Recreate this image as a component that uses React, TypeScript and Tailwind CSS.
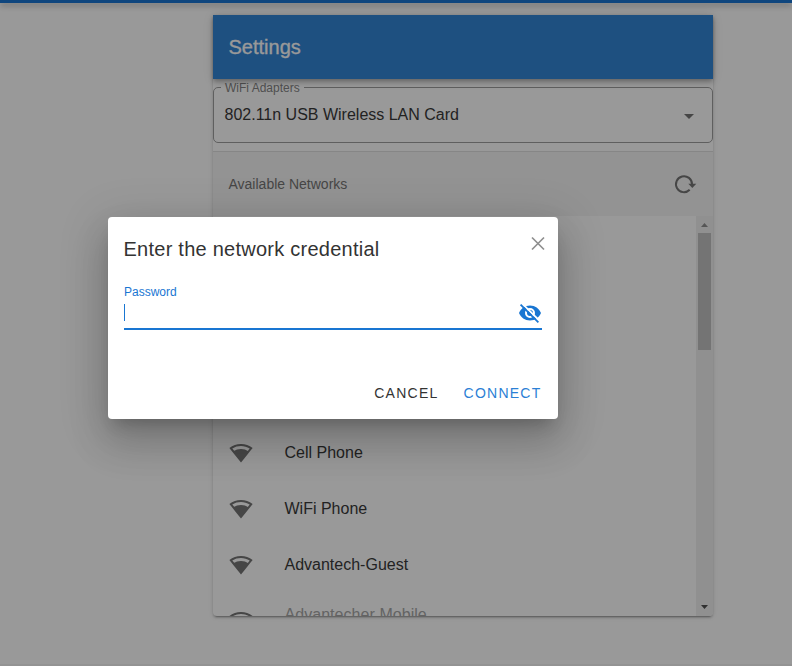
import React from 'react';

function WifiIcon() {
  return (
    <svg className="size-6 shrink-0" viewBox="0 0 24 24" fill="#757575">
      <path d="M12,3C7.79,3 3.7,4.41 0.38,7C4.41,12.06 7.89,16.37 12,21.5C16.08,16.42 20.24,11.24 23.65,7C20.32,4.41 16.22,3 12,3M12,5C15.07,5 18.09,5.86 20.71,7.45L18.77,9.88C17.26,9 14.88,8 12,8C9,8 6.68,9 5.21,9.84L3.27,7.44C5.91,5.85 8.93,5 12,5Z" />
    </svg>
  );
}

function NetworkRow({ name, faded = false }: { name: string; faded?: boolean }) {
  return (
    <li className="flex h-14 items-center pl-4">
      <WifiIcon />
      <span className={faded ? 'ml-[31.5px] -mt-3 text-base tracking-[0.05px] text-[#a6a6a6]' : 'ml-[31.5px] text-base text-[#3a3a3a]'}>{name}</span>
    </li>
  );
}

function Scrollbar() {
  return (
    <div className="flex w-[17px] flex-col items-center bg-[#f1f1f1]">
      <svg className="h-[17px] w-[17px]" viewBox="0 0 17 17" fill="#909090">
        <path d="M5 11h7L8.500 7z" />
      </svg>
      <div className="h-[117px] w-[13px] bg-[#c1c1c1]" />
      <div className="flex-1" />
      <svg className="h-[17px] w-[17px]" viewBox="0 0 17 17" fill="#505050">
        <path d="M5 6h7L8.500 10z" />
      </svg>
    </div>
  );
}

function SettingsCard() {
  return (
    <section className="mt-3 ml-[213px] flex h-[601px] w-[500px] flex-col overflow-visible rounded-b shadow-[0_3px_1px_-2px_rgba(0,0,0,0.2),0_2px_2px_0_rgba(0,0,0,0.14),0_1px_5px_0_rgba(0,0,0,0.12)]">
      <header className="relative flex h-16 shrink-0 items-center bg-[#3385d6] pl-[15.5px] text-white shadow-[0_2px_4px_-1px_rgba(0,0,0,0.2),0_4px_5px_0_rgba(0,0,0,0.14),0_1px_10px_0_rgba(0,0,0,0.12)]">
        <h1 className="text-[20px] [-webkit-text-stroke:0.3px_white]">Settings</h1>
      </header>
      <fieldset className="mt-[2px] h-[62px] shrink-0 rounded-[5px] border border-[#9e9e9e] pl-[7px]">
        <legend className="h-3 px-1 text-xs leading-[14px] text-[#858585]">WiFi Adapters</legend>
        <div className="flex h-12 items-center justify-between pr-[11px]">
          <span className="pb-1 pl-[3.5px] text-base text-[#3a3a3a]">802.11n USB Wireless LAN Card</span>
          <svg className="mb-[3px] size-6" viewBox="0 0 24 24" fill="#757575"><path d="M7,10L12,15L17,10H7Z" /></svg>
        </div>
      </fieldset>
      <div className="mt-2 flex h-[65px] shrink-0 items-center justify-between border-t border-[#dfdfdf] bg-[#f5f5f5] pr-4 pl-[15.5px]">
        <h2 className="text-sm text-[#757575]">Available Networks</h2>
        <svg className="size-6" viewBox="0 0 24 24" fill="none" stroke="#757575" strokeWidth="2">
          <path d="M16.700 17.800A8 8 0 1 1 19 12.300" />
          <path d="M15.300 11.800h8l-4 4.200z" fill="#757575" stroke="none" />
        </svg>
      </div>
      <div className="flex min-h-0 flex-1 overflow-hidden rounded-b">
        <ul className="flex-1 pt-[209px]">
          <NetworkRow name="Cell Phone" />
          <NetworkRow name="WiFi Phone" />
          <NetworkRow name="Advantech-Guest" />
          <NetworkRow name="Advantecher Mobile" faded />
        </ul>
        <Scrollbar />
      </div>
    </section>
  );
}

function PasswordDialog() {
  return (
    <div role="dialog" className="absolute top-[217px] left-[108px] flex h-[202px] w-[450px] flex-col rounded bg-white px-4 shadow-[0_11px_15px_-7px_rgba(0,0,0,0.2),0_24px_38px_3px_rgba(0,0,0,0.14),0_9px_46px_8px_rgba(0,0,0,0.12)]">
      <div className="flex h-16 items-center justify-between">
        <h2 className="-ml-[0.5px] text-[20px] tracking-[0.25px] text-[#333]">Enter the network credential</h2>
        <svg className="-mr-[7.500px] mb-[11px] size-6" viewBox="0 0 24 24" fill="none" stroke="#8f8f8f" strokeWidth="1.700">
          <path d="M6 5.500l12 12M18 5.500L6 17.500" />
        </svg>
      </div>
      <div className="flex h-[49px] flex-col border-b-2 border-[#1976d2] pt-1">
        <label className="text-xs leading-[14px] text-[#1976d2]">Password</label>
        <div className="flex flex-1 items-center justify-between pb-[2px]">
          <span className="h-[17px] w-px bg-[#1976d2]" />
          <svg className="size-6" viewBox="0 0 24 24" fill="#1976d2">
            <path fillRule="evenodd" d="M12 4.500C7 4.500 2.730 7.600 1 12c1.730 4.400 6 7.500 11 7.500s9.270-3.100 11-7.500c-1.730-4.400-6-7.500-11-7.500zM12 17a5 5 0 1 1 0-10 5 5 0 0 1 0 10zM12 9a3 3 0 1 0 0 6 3 3 0 0 0 0-6z" />
            <path d="M4 2.300L21.700 20" fill="none" stroke="white" strokeWidth="1.800" />
            <path d="M2.600 3.600L20.400 21.400" fill="none" stroke="#1976d2" strokeWidth="1.800" />
          </svg>
        </div>
      </div>
      <div className="mt-[45px] flex h-9 items-center justify-end gap-[25px] text-sm">
        <button className="tracking-[1.25px] text-[#333]">CANCEL</button>
        <button className="mr-[0.500px] tracking-[1.25px] text-[#2b80d5]">CONNECT</button>
      </div>
    </div>
  );
}

export default function App() {
  return (
    <main className="relative h-[666px] w-[792px] overflow-hidden bg-white font-['Liberation_Sans',Arial,sans-serif]">
      <div className="h-[3px] bg-[#1976d2] shadow-[0_2px_4px_-1px_rgba(0,0,0,0.2),0_4px_5px_0_rgba(0,0,0,0.14),0_1px_10px_0_rgba(0,0,0,0.12)]" />
      <SettingsCard />
      <div className="absolute inset-x-0 bottom-0 h-0.5 bg-[#f5f5f5]" />
      <div className="absolute inset-0 bg-black/40" />
      <PasswordDialog />
    </main>
  );
}
